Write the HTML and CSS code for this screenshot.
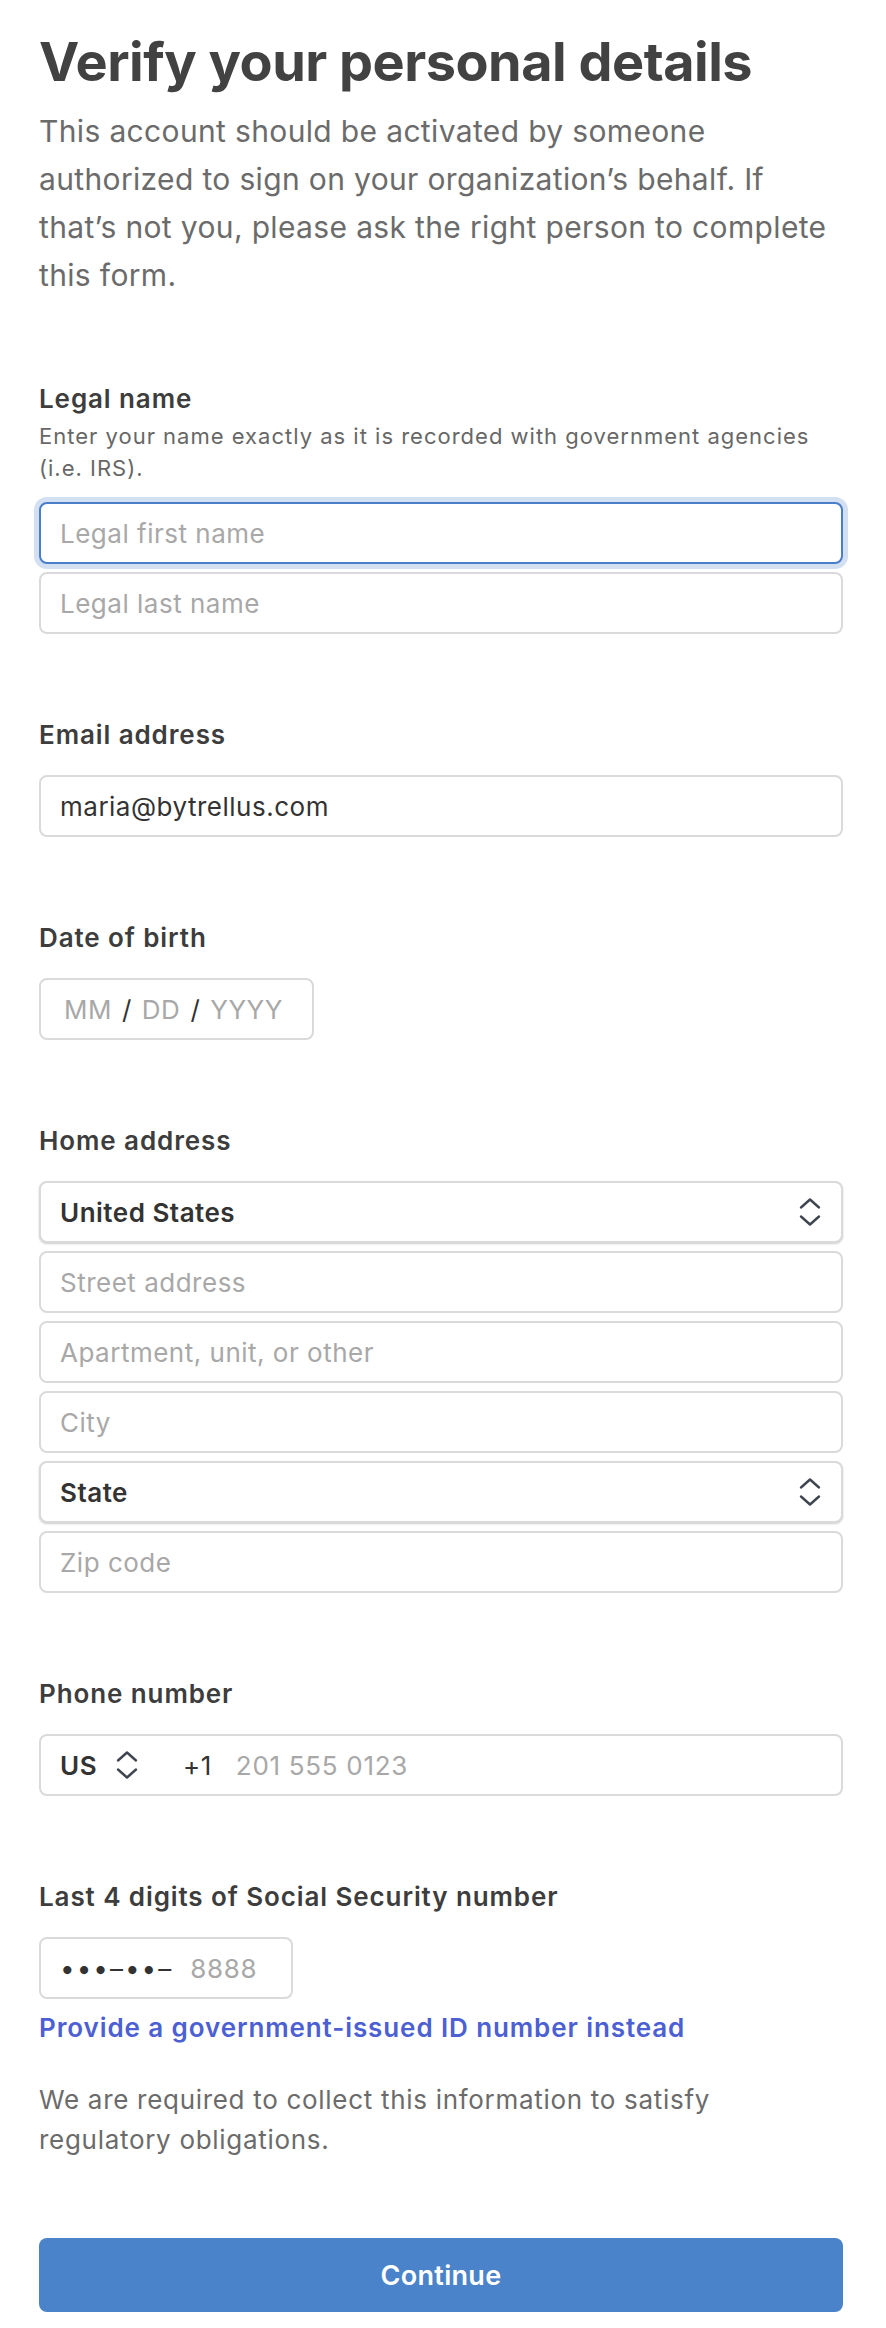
FILE: index.html
```html
<!DOCTYPE html>
<html lang="en">
<head>
<meta charset="utf-8">
<title>Verify your personal details</title>
<link rel="stylesheet" href="styles.css">
</head>
<body>
<main class="page">
  <h1 class="title">Verify your personal details</h1>
  <p class="intro">This account should be activated by someone authorized to sign on your organization’s behalf. If that’s not you, please ask the right person to complete this form.</p>

  <section class="field field-first">
    <h2 class="label">Legal name</h2>
    <p class="hint">Enter your name exactly as it is recorded with government agencies (i.e. IRS).</p>
    <div class="stack stack-hint">
      <input class="input is-focused" type="text" placeholder="Legal first name">
      <input class="input" type="text" placeholder="Legal last name">
    </div>
  </section>

  <section class="field">
    <h2 class="label">Email address</h2>
    <div class="stack">
      <input class="input" type="email" value="maria@bytrellus.com">
    </div>
  </section>

  <section class="field">
    <h2 class="label">Date of birth</h2>
    <div class="stack">
      <div class="input date">
        <span class="ph">MM</span><span class="sep">/</span><span class="ph">DD</span><span class="sep">/</span><span class="ph">YYYY</span>
      </div>
    </div>
  </section>

  <section class="field">
    <h2 class="label">Home address</h2>
    <div class="stack">
      <div class="input select">
        <span>United States</span>
        <svg class="chev" width="22" height="30" viewBox="0 0 22 30" aria-hidden="true"><path d="M2 10.5 L11 2.5 L20 10.5 M2 19.5 L11 27.5 L20 19.5" fill="none" stroke="#3f4650" stroke-width="2.4" stroke-linecap="round" stroke-linejoin="round"/></svg>
      </div>
      <input class="input" type="text" placeholder="Street address">
      <input class="input" type="text" placeholder="Apartment, unit, or other">
      <input class="input" type="text" placeholder="City">
      <div class="input select">
        <span>State</span>
        <svg class="chev" width="22" height="30" viewBox="0 0 22 30" aria-hidden="true"><path d="M2 10.5 L11 2.5 L20 10.5 M2 19.5 L11 27.5 L20 19.5" fill="none" stroke="#3f4650" stroke-width="2.4" stroke-linecap="round" stroke-linejoin="round"/></svg>
      </div>
      <input class="input" type="text" placeholder="Zip code">
    </div>
  </section>

  <section class="field">
    <h2 class="label">Phone number</h2>
    <div class="stack">
      <div class="input phone">
        <span class="country">US</span>
        <svg class="chev chev-phone" width="22" height="30" viewBox="0 0 22 30" aria-hidden="true"><path d="M2 10.5 L11 2.5 L20 10.5 M2 19.5 L11 27.5 L20 19.5" fill="none" stroke="#3f4650" stroke-width="2.4" stroke-linecap="round" stroke-linejoin="round"/></svg>
        <span class="code">+1</span>
        <input class="bare" type="tel" placeholder="201 555 0123">
      </div>
    </div>
  </section>

  <section class="field">
    <h2 class="label">Last 4 digits of Social Security number</h2>
    <div class="stack">
      <div class="input ssn">
        <span class="mask">•••–••–</span>
        <input class="bare" type="text" placeholder="8888">
      </div>
    </div>
  </section>

  <a class="link" href="#">Provide a government-issued ID number instead</a>

  <p class="note">We are required to collect this information to satisfy regulatory obligations.</p>

  <button class="button" type="button">Continue</button>
</main>
</body>
</html>
```

FILE: styles.css
```css
html, body {
  margin: 0;
  padding: 0;
  background: #ffffff;
}

body {
  font-family: Inter, "Liberation Sans", sans-serif;
  color: #404040;
}

.page {
  width: 804px;
  padding: 30px 43px 16px 39px;
}

.title {
  margin: 0;
  font-size: 54px;
  line-height: 64px;
  font-weight: 700;
  letter-spacing: -0.5px;
  color: #424242;
}

.intro {
  margin: 13px 0 0;
  font-size: 30px;
  line-height: 48px;
  letter-spacing: 0.35px;
  color: #6b6b6b;
}

.field {
  margin-top: 86px;
}

.field-first {
  margin-top: 85px;
}

.label {
  margin: 0;
  font-size: 26px;
  line-height: 30px;
  font-weight: 600;
  letter-spacing: 0.9px;
  color: #3d3d3d;
}

.hint {
  margin: 6px 0 0;
  font-size: 22px;
  line-height: 32px;
  letter-spacing: 1px;
  color: #676767;
}

.stack {
  display: flex;
  flex-direction: column;
  gap: 8px;
  margin-top: 25px;
}

.stack-hint {
  margin-top: 18px;
}

.input {
  display: flex;
  align-items: center;
  box-sizing: border-box;
  width: 100%;
  height: 62px;
  margin: 0;
  padding: 0 19px;
  border: 2px solid #dadada;
  border-radius: 8px;
  background: #ffffff;
  font-family: inherit;
  font-size: 26px;
  letter-spacing: 0.5px;
  color: #333333;
  outline: none;
}

.input::placeholder,
.bare::placeholder {
  color: #a8a8a8;
  opacity: 1;
}

.is-focused {
  border-color: #4a7ec8;
  box-shadow: 0 0 0 5px #d3e0f1;
}

.date {
  width: 275px;
  gap: 10px;
  padding-left: 23px;
}

.ph {
  color: #a8a8a8;
}

.sep {
  color: #333333;
}

.select {
  justify-content: space-between;
  font-weight: 600;
  color: #333333;
  padding-right: 20px;
  box-shadow: 0 1px 2px rgba(0, 0, 0, 0.2);
}

.chev {
  display: block;
  flex: none;
}

.phone .country {
  font-weight: 600;
}

.chev-phone {
  margin-left: 19px;
}

.phone .code {
  margin-left: 45px;
  color: #333333;
}

.bare {
  flex: 1;
  min-width: 0;
  border: 0;
  padding: 0;
  margin: 0 0 0 24px;
  background: transparent;
  font-family: inherit;
  font-size: 26px;
  letter-spacing: 0.7px;
  color: #333333;
  outline: none;
}

.ssn {
  width: 254px;
}

.mask {
  color: #333333;
  letter-spacing: 2px;
  flex: none;
}

.ssn .bare {
  margin-left: 17px;
}

.link {
  display: block;
  margin-top: 14px;
  font-size: 26px;
  line-height: 30px;
  font-weight: 600;
  letter-spacing: 0.9px;
  color: #4c5fd3;
  text-decoration: none;
}

.note {
  margin: 37px 0 0;
  font-size: 26px;
  line-height: 40px;
  letter-spacing: 0.7px;
  color: #6b6b6b;
}

.button {
  display: block;
  width: 100%;
  height: 74px;
  margin-top: 78px;
  border: 0;
  border-radius: 8px;
  background: #4a83c9;
  color: #ffffff;
  font-family: inherit;
  font-size: 27px;
  font-weight: 600;
  letter-spacing: 0.3px;
}
```
